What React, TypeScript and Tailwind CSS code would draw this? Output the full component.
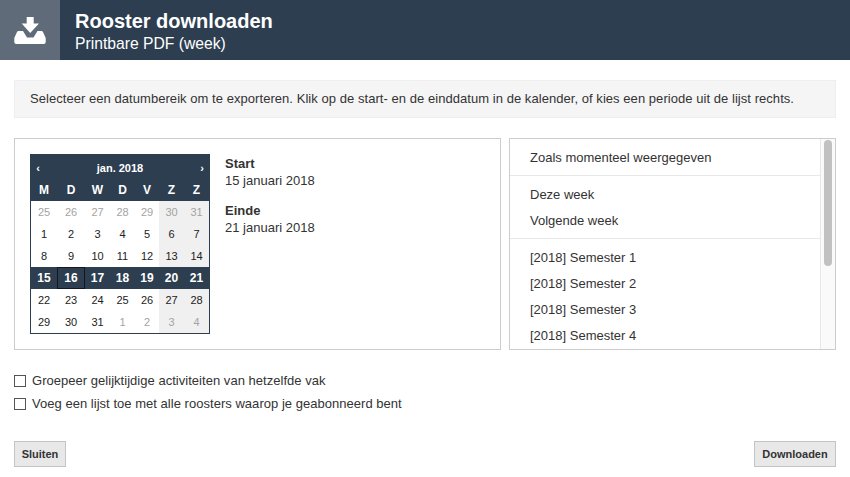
const navy = "bg-[#2c3e50]";
const dow = ["M", "D", "W", "D", "V", "Z", "Z"];
const gridCols = "grid grid-cols-[26px_28px_25px_25px_24px_25px_25px]";

const weeks: { label: number; muted?: boolean }[][] = [
  [25, 26, 27, 28, 29, 30, 31].map((label) => ({ label, muted: true })),
  [1, 2, 3, 4, 5, 6, 7].map((label) => ({ label })),
  [8, 9, 10, 11, 12, 13, 14].map((label) => ({ label })),
  [15, 16, 17, 18, 19, 20, 21].map((label) => ({ label })),
  [22, 23, 24, 25, 26, 27, 28].map((label) => ({ label })),
  [
    { label: 29 },
    { label: 30 },
    { label: 31 },
    { label: 1, muted: true },
    { label: 2, muted: true },
    { label: 3, muted: true },
    { label: 4, muted: true },
  ],
];

function DownloadIcon() {
  return (
    <svg width="60" height="60" viewBox="0 0 60 60" fill="#ffffff">
      <path d="M26.7 17H33.7V23.5H39L30.2 33L21.7 23.5H26.7Z" />
      <path d="M18.5 31H23L27 37.5H33.5L37.5 31H41.5Q42.5 31 43 32L45.7 38V42Q45.7 44 43.7 44H16.3Q14.3 44 14.3 42V38L17 32Q17.5 31 18.5 31Z" />
    </svg>
  );
}

function Calendar() {
  return (
    <div className="w-[180px] shrink-0 self-start border border-[#2c3e50] bg-white">
      <div className={`${navy} text-white`}>
        <div className="flex h-[24px] items-center justify-between px-[3px] pt-[2px] text-[11px] font-bold">
          <span className="w-[8px] text-center">‹</span>
          <span>jan. 2018</span>
          <span className="w-[8px] text-center">›</span>
        </div>
        <div className={`${gridCols} h-[22px] items-center text-center text-[12px] font-bold`}>
          {dow.map((d, i) => (
            <span key={i}>{d}</span>
          ))}
        </div>
      </div>
      {weeks.map((week, w) => (
        <div key={w} className={`${gridCols} h-[22px] text-center text-[11px] leading-[22px]`}>
          {week.map((day, i) => {
            if (w === 3) {
              return (
                <span
                  key={i}
                  className={`${navy} text-[12px] font-bold text-white ${i === 1 ? "border border-[#14181c] leading-[20px]" : ""}`}
                >
                  {day.label}
                </span>
              );
            }
            return (
              <span
                key={i}
                className={`${i > 4 ? "bg-[#f0f0f0]" : ""} ${day.muted ? "text-[#a3a3a3]" : "text-[#222222]"}`}
              >
                {day.label}
              </span>
            );
          })}
        </div>
      ))}
    </div>
  );
}

function ListItem({ children }: { children: string }) {
  return <div className="h-[26px] pl-[20px] text-[13px] leading-[26px] text-[#333333]">{children}</div>;
}

function Option({ children }: { children: string }) {
  return (
    <label className="flex h-[23px] items-center gap-[6px] text-[13px] tracking-[0.03px] text-[#333333]">
      <input type="checkbox" className="h-[12px] w-[12px] appearance-none border border-[#555555] bg-white" />
      {children}
    </label>
  );
}

function ActionButton({ children, width }: { children: string; width: string }) {
  return (
    <button className={`h-[26px] ${width} border border-[#c4c4c4] bg-[#e8e8e8] text-[11px] font-bold text-[#333333]`}>
      {children}
    </button>
  );
}

export default function App() {
  return (
    <div className="h-[477px] w-[850px] overflow-hidden bg-white font-['Liberation_Sans',Arial,sans-serif]">
      {/* Header */}
      <div className={`flex h-[60px] ${navy} text-white`}>
        <div className="w-[60px] bg-[#5f6b79]">
          <DownloadIcon />
        </div>
        <div className="pl-[15px] pt-[10px]">
          <div className="text-[20px] font-bold leading-[23px]">Rooster downloaden</div>
          <div className="text-[15.7px] leading-[22px]">Printbare PDF (week)</div>
        </div>
      </div>

      <div className="px-[14px] pt-[20px]">
        <div className="h-[38px] border border-[#eeeeee] bg-[#f5f5f5] pl-[15px] text-[13px] leading-[36px] tracking-[0.05px] text-[#333333]">
          Selecteer een datumbereik om te exporteren. Klik op de start- en de einddatum in de kalender, of kies een
          periode uit de lijst rechts.
        </div>

        <div className="mt-[20px] flex h-[212px] gap-[8px]">
          <div className="flex w-[487px] gap-[15px] border border-[#cccccc] pl-[15px] pt-[15px]">
            <Calendar />
            <div className="pt-[1px] text-[13px] leading-[17px] text-[#333333]">
              <div className="font-bold">Start</div>
              <div>15 januari 2018</div>
              <div className="mt-[13px] font-bold">Einde</div>
              <div>21 januari 2018</div>
            </div>
          </div>

          <div className="flex flex-1 overflow-hidden border border-[#cccccc]">
            <div className="flex-1 overflow-hidden">
              <div className="border-b border-[#e8e8e8] pb-[4px] pt-[6px]">
                <ListItem>Zoals momenteel weergegeven</ListItem>
              </div>
              <div className="border-b border-[#e8e8e8] pb-[4px] pt-[6px]">
                <ListItem>Deze week</ListItem>
                <ListItem>Volgende week</ListItem>
              </div>
              <div className="pb-[4px] pt-[6px]">
                <ListItem>[2018] Semester 1</ListItem>
                <ListItem>[2018] Semester 2</ListItem>
                <ListItem>[2018] Semester 3</ListItem>
                <ListItem>[2018] Semester 4</ListItem>
              </div>
            </div>
            <div className="w-[15px] border-l border-[#e8e8e8] bg-[#fafafa] pl-[3px] pt-[1px]">
              <div className="h-[126px] w-[8px] rounded-[4px] bg-[#c1c1c1]" />
            </div>
          </div>
        </div>

        <div className="mt-[19px]">
          <Option>Groepeer gelijktijdige activiteiten van hetzelfde vak</Option>
          <Option>Voeg een lijst toe met alle roosters waarop je geabonneerd bent</Option>
        </div>

        <div className="mt-[26px] flex justify-between">
          <ActionButton width="w-[52px]">Sluiten</ActionButton>
          <ActionButton width="w-[82px]">Downloaden</ActionButton>
        </div>
      </div>
    </div>
  );
}
